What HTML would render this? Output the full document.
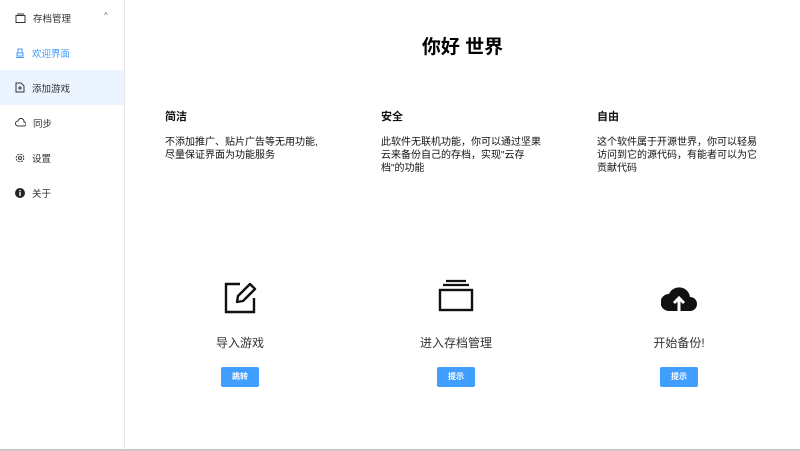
<!DOCTYPE html>
<html><head><meta charset="utf-8"><style>
*{margin:0;padding:0;box-sizing:border-box}
body{width:800px;height:451px;overflow:hidden;background:#fff;font-family:"Liberation Sans","Noto Sans CJK SC",sans-serif;position:relative;color:#303133}
.side{position:absolute;left:0;top:0;width:125px;height:450px;border-right:1px solid #e6e6e6;background:#fff}
.it{position:absolute;left:0;width:124px;height:35px;font-size:9.5px;color:#303133;display:flex;align-items:center;padding-left:15px}
.it svg{margin-right:7px}
.bot{position:absolute;left:0;bottom:0;width:800px;height:2px;background:#c8c8c8}
h1{position:absolute;left:125px;width:675px;text-align:center;top:32px;font-size:19px;font-weight:bold;color:#000}
.col{position:absolute;top:108px;width:190px;font-size:10px;color:#111}
.col b{display:block;font-size:11px;margin-bottom:12px}
.col p{line-height:13px}
.act{position:absolute;top:280px;width:120px;text-align:center}
.act .lbl{position:absolute;top:54px;left:0;width:120px;font-size:12px;color:#333}
.btn{position:absolute;top:87px;left:41px;width:38px;height:20px;background:#409eff;border-radius:2px;color:#fff;font-size:8px;line-height:20px;text-align:center;font-weight:bold}
</style></head><body>
<div class="side">
<div class="it" style="top:0"><svg width="11" height="10" viewBox="0 0 11 10"><rect x="1" y="2.5" width="9" height="7" fill="none" stroke="#333"/><line x1="2" y1="1" x2="9" y2="1" stroke="#333"/></svg>存档管理<span style="position:absolute;left:104px;top:11px;font-size:8px;color:#666">^</span></div>
<div class="it" style="top:35px;color:#409eff"><svg width="10" height="10" viewBox="0 0 10 10"><path d="M3 1h4v4H3zM2 5h6v3H2zM1 9.5h8" fill="none" stroke="#409eff"/></svg>欢迎界面</div>
<div class="it" style="top:70px;background:#ecf5ff"><svg width="10" height="11" viewBox="0 0 10 11"><path d="M1 1h5l3 3v6H1z M3 6h4M5 4v4" fill="none" stroke="#333"/></svg>添加游戏</div>
<div class="it" style="top:105px"><svg width="11" height="9" viewBox="0 0 11 9"><path d="M3 8h6a2 2 0 0 0 0-4 3 3 0 0 0-6-1 2.5 2.5 0 0 0 0 5z" fill="none" stroke="#333"/></svg>同步</div>
<div class="it" style="top:140px"><svg width="10" height="10" viewBox="0 0 10 10"><circle cx="5" cy="5" r="3.8" fill="none" stroke="#333" stroke-dasharray="2 1"/><circle cx="5" cy="5" r="1.5" fill="none" stroke="#333"/></svg>设置</div>
<div class="it" style="top:175px"><svg width="10" height="10" viewBox="0 0 10 10"><circle cx="5" cy="5" r="5" fill="#222"/><rect x="4.3" y="4" width="1.4" height="4" fill="#fff"/><circle cx="5" cy="2.6" r=".8" fill="#fff"/></svg>关于</div>
</div>
<h1>你好 世界</h1>
<div class="col" style="left:165px"><b>简洁</b><p>不添加推广、贴片广告等无用功能,<br>尽量保证界面为功能服务</p></div>
<div class="col" style="left:381px"><b>安全</b><p>此软件无联机功能，你可以通过坚果<br>云来备份自己的存档，实现"云存<br>档"的功能</p></div>
<div class="col" style="left:597px"><b>自由</b><p>这个软件属于开源世界，你可以轻易<br>访问到它的源代码，有能者可以为它<br>贡献代码</p></div>

<div class="act" style="left:180px">
<svg style="position:absolute;left:44px;top:0" width="34" height="34" viewBox="0 0 34 34"><path d="M16 4H2v28h28V18" fill="none" stroke="#111" stroke-width="2.4"/><path d="M13 22l1-6 12-12 5 5-12 12z" fill="none" stroke="#111" stroke-width="2.4" stroke-linejoin="round"/></svg>
<div class="lbl">导入游戏</div><div class="btn">跳转</div></div>

<div class="act" style="left:396px">
<svg style="position:absolute;left:42px;top:-2px" width="36" height="36" viewBox="0 0 36 36"><path d="M8 3h20M5 7h26" stroke="#111" stroke-width="2.2"/><rect x="2" y="12" width="32" height="20" fill="none" stroke="#111" stroke-width="2.4"/></svg>
<div class="lbl">进入存档管理</div><div class="btn">提示</div></div>

<div class="act" style="left:619px">
<svg style="position:absolute;left:42px;top:2px" width="36" height="32" viewBox="0 0 36 30"><path d="M8 28h21a7 7 0 0 0 0-14A11 11 0 0 0 8 11 8.5 8.5 0 0 0 8 28z" fill="#111"/><path d="M18 28V16M13 20l5-5 5 5" fill="none" stroke="#fff" stroke-width="3"/></svg>
<div class="lbl">开始备份!</div><div class="btn">提示</div></div>
<div class="bot"></div>
</body></html>
